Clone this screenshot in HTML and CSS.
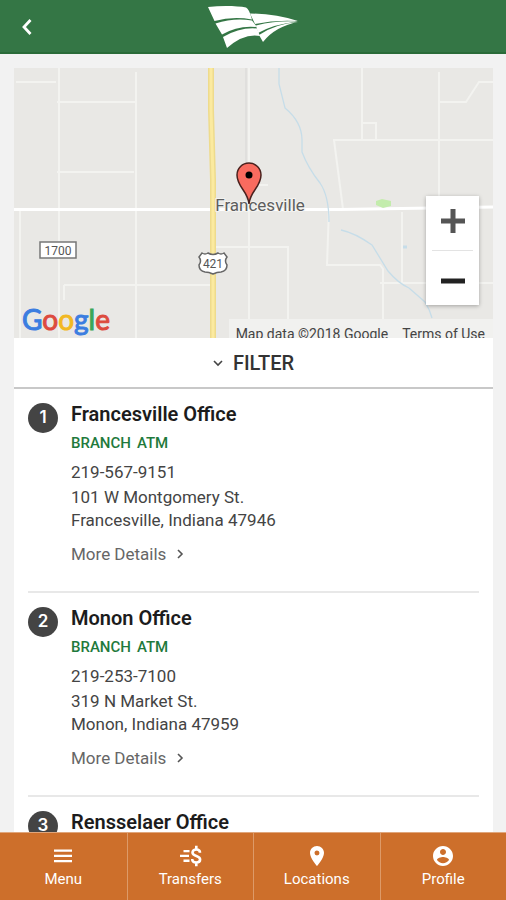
FILE: index.html
```html
<!DOCTYPE html>
<html lang="en">
<head>
<meta charset="utf-8">
<meta name="viewport" content="width=device-width, initial-scale=1">
<title>Locations</title>
<link rel="stylesheet" href="styles.css">
</head>
<body>
<header class="topbar">
  <button class="back" type="button" aria-label="Back">
    <svg width="12" height="18" viewBox="0 0 12 18"><path d="M10.500 2 4 9l6.500 7" fill="none" stroke="#fff" stroke-width="2.800"/></svg>
  </button>
  <svg class="logo" width="92" height="44" viewBox="0 0 92 44" fill="#fff" aria-hidden="true">
    <path d="M1 2C15 .5 31 1 39 2.500Q42 3.500 45 14.500Q26 11 7.500 16Z"/>
    <path d="M8.500 18.500Q27 12.500 45 15.500L50 22Q31 20 15 29.500Z"/>
    <path d="M16 32Q33 22 50 23.500L53 31Q37 28 20 43Z"/>
    <path d="M43 8.500Q69 9 91 16Q69 14.500 48 19Z"/>
    <path d="M49 20.500Q69 15.500 91 16.500Q67 19 51 28Z"/>
    <path d="M52 30Q68 19 91 17Q68 21.500 56 37Z"/>
  </svg>
</header>

<main class="content">
  <section class="map" aria-label="Map">
    <svg class="map-art" viewBox="14 68 479 270" preserveAspectRatio="xMidYMid slice">
      <rect x="14" y="68" width="479" height="270" fill="#e9e8e5"/>
      <g fill="none" stroke="#f3f3f0" stroke-width="2">
        <path d="M16 82H56M59 68V338M57 102H136M57 172H134M136 72V338M20 210V338M64 285H210M64 285V300"/>
        <path d="M249 68V338M215 247H288V338M250 185H268"/>
        <path d="M362 68V140M362 123H376V140M333 140H493M334 140 343 209M439 72V200M439 102H466L479 82H493"/>
        <path d="M329 208 327 265H380L383 269V338M402 212V282M380 283H493"/>
      </g>
      <path d="M246 68V200" stroke="#dcdcda" stroke-width="1.500"/>
      <path d="M14 209.500H340L493 207" fill="none" stroke="#fff" stroke-width="3"/>
      <g fill="none" stroke="#c6dde9" stroke-width="1.300">
        <path d="M279 68V84L285 108Q302 122 302 140V152Q308 168 320 183Q329 196 329 222M341 230Q355 233 372 245L388 271Q398 283 409 288L425 302Q430 310 432 318"/>
        <path d="M403 247h4" stroke-width="3"/>
      </g>
      <path d="M376 201l6-2 9 2v5l-8 2-7-3z" fill="#c3ecac"/>
      <path d="M211 68 211 110 213 180V338" fill="none" stroke="#eedb8c" stroke-width="6"/>
      <path d="M211 68 211 110 213 180V338" fill="none" stroke="#fbea9f" stroke-width="3"/>
      <rect x="40" y="242" width="36" height="16" fill="#fff" stroke="#777" stroke-width="1.500"/>
      <text class="road" x="58" y="254.500">1700</text>
      <path d="M202 253q3 2 6 0 5 3 10 0 3 2 6 0l3 4q-3 4 0 8 0 6-6 7-4 0-8 2-4-2-8-2-6-1-6-7 3-4 0-8Z" fill="#fff" stroke="#666" stroke-width="1.500"/>
      <text class="road" x="213" y="267.500">421</text>
      <text class="town" x="260" y="211">Francesville</text>
      <path d="M249 204C248 191 237 187 237 175a12 12 0 0 1 24 0C261 187 250 191 249 204Z" fill="#f96b5f" stroke="#4a211e" stroke-width="1.500"/>
      <circle cx="249" cy="175" r="3.500"/>
    </svg>
    <span class="google"><span class="g-blue">G</span><span class="g-red">o</span><span class="g-yellow">o</span><span class="g-blue">g</span><span class="g-green">l</span><span class="g-red">e</span></span>
    <div class="attribution"><span>Map data ©2018 Google</span><a href="#terms">Terms of Use</a></div>
    <div class="zoom">
      <button type="button" aria-label="Zoom in"><svg width="26" height="26" viewBox="0 0 26 26"><path d="M13 1v24M1 13h24" stroke="#555" stroke-width="5"/></svg></button>
      <button type="button" aria-label="Zoom out"><svg width="26" height="26" viewBox="0 0 26 26"><path d="M1 13h24" stroke="#222" stroke-width="5"/></svg></button>
    </div>
  </section>

  <button class="filter" type="button">
    <svg width="10" height="8" viewBox="0 0 10 8"><path d="M1 2l4 4 4-4" fill="none" stroke="#444" stroke-width="1.600"/></svg>
    FILTER
  </button>

  <ol class="offices">
    <li class="office">
      <span class="number">1</span>
      <div class="details">
        <h2>Francesville Office</h2>
        <p class="tags"><span>BRANCH</span><span>ATM</span></p>
        <p class="phone">219-567-9151</p>
        <p class="address">101 W Montgomery St.<br>Francesville, Indiana 47946</p>
        <a class="more" href="#francesville">More Details <svg width="8" height="10" viewBox="0 0 8 10"><path d="M2 1l4 4-4 4" fill="none" stroke="#555" stroke-width="1.600"/></svg></a>
      </div>
    </li>
    <li class="office">
      <span class="number">2</span>
      <div class="details">
        <h2>Monon Office</h2>
        <p class="tags"><span>BRANCH</span><span>ATM</span></p>
        <p class="phone">219-253-7100</p>
        <p class="address">319 N Market St.<br>Monon, Indiana 47959</p>
        <a class="more" href="#monon">More Details <svg width="8" height="10" viewBox="0 0 8 10"><path d="M2 1l4 4-4 4" fill="none" stroke="#555" stroke-width="1.600"/></svg></a>
      </div>
    </li>
    <li class="office">
      <span class="number">3</span>
      <div class="details">
        <h2>Rensselaer Office</h2>
      </div>
    </li>
  </ol>
</main>

<nav class="tabs">
  <a href="#menu"><svg width="24" height="24" viewBox="0 0 24 24"><path d="M3 18.300h18v-2.300H3zm0-5.200h18v-2.300H3zm0-7.600v2.300h18V5.500z"/></svg>Menu</a>
  <a href="#transfers"><svg width="24" height="24" viewBox="0 0 24 24"><path d="M5.500 6h6v2.300h-6zM2 10.800h9v2.300H2zM5.500 15.600h6v2.300h-6z"/><path d="M22 8.800C22 6.600 20.500 5.500 18.300 5.500S14.500 6.600 14.500 8.600c0 4.200 7.600 2.700 7.600 6.800 0 2-1.600 3.100-3.900 3.100s-4-1.200-4-3.500M18.300 1.800v3.700M18.300 18.500v3.700" fill="none" stroke="#fff" stroke-width="2.600"/></svg>Transfers</a>
  <a href="#locations"><svg width="24" height="24" viewBox="0 0 24 24"><path d="M12 2C8.130 2 5 5.130 5 9c0 5.250 7 13 7 13s7-7.750 7-13c0-3.870-3.130-7-7-7zm0 9.500a2.500 2.500 0 0 1 0-5 2.500 2.500 0 0 1 0 5z"/></svg>Locations</a>
  <a href="#profile"><svg width="24" height="24" viewBox="0 0 24 24"><path d="M12 2C6.480 2 2 6.480 2 12s4.480 10 10 10 10-4.480 10-10S17.520 2 12 2zm0 3c1.660 0 3 1.340 3 3s-1.340 3-3 3-3-1.340-3-3 1.340-3 3-3zm0 14.200c-2.500 0-4.710-1.280-6-3.220.030-1.990 4-3.080 6-3.080 1.990 0 5.970 1.090 6 3.080-1.290 1.940-3.500 3.220-6 3.220z"/></svg>Profile</a>
</nav>
</body>
</html>
```
FILE: styles.css
```css
* { box-sizing: border-box; }

body {
  margin: 0;
  height: 100vh;
  display: flex;
  flex-direction: column;
  background: #f2f2f2;
  color: #444;
  font-family: Roboto, "Liberation Sans", sans-serif;
  font-size: 17px;
}

button {
  border: 0;
  padding: 0;
  background: none;
  font: inherit;
  color: inherit;
}

a { color: inherit; text-decoration: none; }
svg { display: block; }
h2, p, ol { margin: 0; padding: 0; }

.topbar {
  flex: none;
  height: 54px;
  display: grid;
  grid-template-columns: 1fr auto 1fr;
  align-items: center;
  padding: 1px 20px 0;
  background: #347645;
  border-bottom: 2px solid #2a6b39;
}

.back { justify-self: start; }

.content {
  flex: 1;
  min-height: 0;
  overflow: hidden;
  margin: 14px 13px 0 14px;
  background: #fff;
}

.map {
  position: relative;
  height: 270px;
  overflow: hidden;
  background: #e9e8e5;
}

.map-art { width: 100%; height: 100%; }
.road { font-size: 12px; fill: #555; text-anchor: middle; }
.town {
  font-size: 17px;
  fill: #5d5d5d;
  text-anchor: middle;
  stroke: #f3f3f0;
  stroke-width: 2px;
  paint-order: stroke;
}

.google {
  position: absolute;
  left: 8px;
  bottom: 2px;
  font-family: Lato, sans-serif;
  font-size: 28px;
  font-weight: 400;
  line-height: 34px;
  -webkit-text-stroke: 1px;
}
.g-blue { color: #3b7de0; }
.g-red { color: #dd4b3e; }
.g-yellow { color: #f2b822; }
.g-green { color: #3aa757; }

.attribution {
  position: absolute;
  right: 0;
  bottom: -11px;
  display: flex;
  gap: 14px;
  padding: 0 8px 0 7px;
  background: #f1f1ef;
  font-size: 14px;
  line-height: 30px;
}

.zoom {
  position: absolute;
  right: 14px;
  top: 128px;
  width: 53px;
  padding: 0 6px;
  background: #fff;
  box-shadow: 0 1px 4px rgba(0, 0, 0, 0.3);
}
.zoom button {
  display: flex;
  width: 100%;
  height: 54px;
  padding-bottom: 5px;
  align-items: center;
  justify-content: center;
}
.zoom button + button {
  height: 55px;
  padding: 5px 0 0;
  border-top: 1px solid #e3e3e3;
}

.filter {
  display: flex;
  width: 100%;
  height: 51px;
  align-items: center;
  justify-content: center;
  gap: 10px;
  border-bottom: 2px solid #c8c8c8;
  color: #333;
  font-size: 20px;
  font-weight: 500;
}

.offices { list-style: none; margin: 0 14px; }

.office {
  display: flex;
  align-items: flex-start;
  gap: 13px;
  padding: 13px 0 25px;
  border-bottom: 2px solid #e8e8e8;
}

.number {
  flex: none;
  width: 30px;
  height: 30px;
  margin-top: 1px;
  border-radius: 50%;
  background: #444;
  color: #fff;
  font-family: Inter, sans-serif;
  font-size: 17px;
  font-weight: 600;
  line-height: 28px;
  text-align: center;
}

h2 {
  color: #1c1c1c;
  font-size: 20px;
  font-weight: 600;
  line-height: 24px;
}

.tags {
  display: flex;
  gap: 6px;
  margin: 7px 0;
  color: #1f7a3c;
  font-size: 15px;
  font-weight: 500;
  line-height: 20px;
}

.phone { line-height: 24px; margin-bottom: 2px; }
.address { line-height: 23px; }

.more {
  display: flex;
  align-items: center;
  gap: 10px;
  margin-top: 10px;
  color: #666;
  line-height: 24px;
}

.tabs {
  flex: none;
  display: grid;
  grid-template-columns: repeat(4, 1fr);
  height: 68px;
  border-top: 1px solid #e0a67c;
  background: #cd6f2b;
  color: #fff;
  fill: #fff;
  font-size: 15px;
  line-height: 20px;
}
.tabs a {
  display: flex;
  flex-direction: column;
  align-items: center;
  padding-top: 11px;
  gap: 1px;
}
.tabs a + a { border-left: 1px solid #dd9a68; }
```
